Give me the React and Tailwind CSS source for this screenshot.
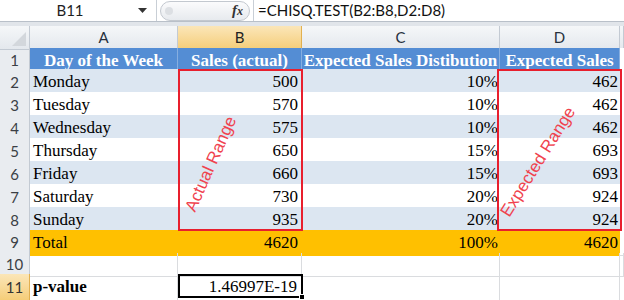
import React from 'react';

const rows = [
  ['Monday', 500, '10%', 462],
  ['Tuesday', 570, '10%', 462],
  ['Wednesday', 575, '10%', 462],
  ['Thursday', 650, '15%', 693],
  ['Friday', 660, '15%', 693],
  ['Saturday', 730, '20%', 924],
  ['Sunday', 935, '20%', 924],
];

const cols = 'grid grid-cols-[30px_148px_124px_198px_120px_1fr]';
const serif = "font-['Liberation_Serif','Times_New_Roman',serif]";
const ui = "font-['Lato','Liberation_Sans',sans-serif]";

const RowNum = ({ n, active }) => (
  <div
    className={`flex items-center justify-center border-r border-b text-[15px] ${ui} ${
      active
        ? 'bg-gradient-to-b from-[#fbe6b8] to-[#f5cd78] border-[#e2b04f] text-[#333]'
        : 'bg-[#e9ecf0] border-[#c3cad3] text-[#3b3f45]'
    }`}
  >
    {n}
  </div>
);

const App = () => {
  return (
    <div className="relative w-[624px] h-[300px] overflow-hidden bg-white">
      {/* Formula bar */}
      <div className={`flex h-[22px] items-center bg-white border-b border-[#b9c0c9] ${ui}`}>
        <div className="flex h-full w-[157px] items-center border-r border-[#c9cfd6]">
          <span className="w-[140px] text-center text-[15px] text-[#1e1e1e]">B11</span>
          <svg width="9" height="5" viewBox="0 0 9 5" className="ml-[-2px]">
            <path d="M0 0 H9 L4.5 5 Z" fill="#333" />
          </svg>
        </div>
        <div className="flex h-full w-[96px] items-center px-[3px]">
          <div className="flex h-[20px] w-full items-center justify-between rounded-full border border-[#c3c8cf] bg-gradient-to-b from-[#fbfbfc] to-[#e7eaee] pl-[4px] pr-[6px]">
            <span className="h-[8px] w-[8px] rounded-full bg-[#dcdfe3]"></span>
            <span className="font-['Liberation_Serif',serif] text-[15px] italic font-bold text-[#333]">
              f<span className="text-[12px]">x</span>
            </span>
          </div>
        </div>
        <div className="flex h-full flex-1 items-center border-l border-[#c9cfd6] pl-[4px] text-[15px] text-[#111]">
          =CHISQ.TEST(B2:B8,D2:D8)
        </div>
      </div>
      <div className="h-[4px] bg-[#e1e5ea]"></div>

      {/* Column headers */}
      <div className={`${cols} h-[22px] text-[15px] ${ui}`}>
        <div className="relative border-r border-b border-[#c3cad3] bg-gradient-to-b from-[#f5f7f9] to-[#e4e8ed]">
          <svg width="14" height="14" viewBox="0 0 14 14" className="absolute right-[3px] bottom-[3px]">
            <path d="M14 0 V14 H0 Z" fill="#d3d7dc" />
          </svg>
        </div>
        {['A', 'B', 'C', 'D', ''].map((c) => (
          <div
            key={c}
            className={`flex items-center justify-center border-r border-b ${
              c === 'B'
                ? 'bg-gradient-to-b from-[#fbe6b8] to-[#f5cd78] border-[#e2b04f] text-[#222]'
                : 'bg-gradient-to-b from-[#f5f7f9] to-[#e4e8ed] border-[#c3cad3] text-[#27313d]'
            }`}
          >
            {c}
          </div>
        ))}
      </div>

      {/* Row 1: table header */}
      <div className={`${cols} h-[21px] ${serif}`}>
        <RowNum n={1} />
        {['Day of the Week', 'Sales (actual)', 'Expected Sales Distibution', 'Expected Sales'].map((h) => (
          <div
            key={h}
            className="flex items-center justify-center overflow-visible whitespace-nowrap border-r border-[#86aee0] bg-[#548dd4] text-[17px] font-bold text-white"
          >
            {h}
          </div>
        ))}
        <div className="bg-white"></div>
      </div>

      {/* Rows 2-8 */}
      {rows.map((r, i) => {
        const band = i % 2 === 0 ? 'bg-[#dce6f1]' : 'bg-white';
        return (
          <div key={r[0]} className={`${cols} h-[23px] ${serif} text-[17px] text-black`}>
            <RowNum n={i + 2} />
            <div className={`${band} flex items-center border-b border-[#9fbadd] pl-[3px]`}>{r[0]}</div>
            <div className={`${band} flex items-center justify-end border-b border-[#9fbadd] pr-[4px]`}>{r[1]}</div>
            <div className={`${band} flex items-center justify-end border-b border-[#9fbadd] pr-[2px]`}>{r[2]}</div>
            <div className={`${band} flex items-center justify-end border-b border-[#9fbadd] pr-[2px]`}>{r[3]}</div>
            <div className="bg-white border-b border-[#dadcdf]"></div>
          </div>
        );
      })}

      {/* Row 9: total */}
      <div className={`${cols} h-[23px] ${serif} text-[17px] text-black`}>
        <RowNum n={9} />
        <div className="flex items-center bg-[#ffc000] pl-[3px]">Total</div>
        <div className="flex items-center justify-end bg-[#ffc000] pr-[4px]">4620</div>
        <div className="flex items-center justify-end bg-[#ffc000] pr-[2px]">100%</div>
        <div className="flex items-center justify-end bg-[#ffc000] pr-[2px]">4620</div>
        <div className="bg-white border-b border-[#dadcdf]"></div>
      </div>

      {/* Row 10 */}
      <div className={`${cols} h-[21px]`}>
        <RowNum n={10} />
        {[0, 1, 2, 3, 4].map((k) => (
          <div key={k} className="border-r border-b border-[#dadcdf]"></div>
        ))}
      </div>

      {/* Row 11 */}
      <div className={`${cols} h-[24px] ${serif} text-[17px] text-black`}>
        <RowNum n={11} active />
        <div className="flex items-center border-r border-b border-[#dadcdf] pl-[3px] font-bold">p-value</div>
        <div className="flex items-center justify-end border-r border-b border-[#dadcdf] pr-[4px]">1.46997E-19</div>
        <div className="border-r border-b border-[#dadcdf]"></div>
        <div className="border-r border-b border-[#dadcdf]"></div>
        <div className="border-b border-[#dadcdf]"></div>
      </div>

      {/* Overlays: selected cell and drawn annotations */}
      <div className="absolute left-[178px] top-[274px] h-[24px] w-[125px] border-2 border-black"></div>
      <div className="absolute left-[299px] top-[294px] h-[6px] w-[6px] border border-white bg-black"></div>

      <div className="absolute left-[178px] top-[69px] h-[162px] w-[125px] border-2 border-[#e81f2d]"></div>
      <div className="absolute left-[497px] top-[69px] h-[162px] w-[125px] border-2 border-[#e81f2d]"></div>

      <div
        className={`absolute left-[211px] top-[164px] -translate-x-1/2 -translate-y-1/2 rotate-[-66deg] whitespace-nowrap text-[17px] text-[#f0424e] font-['Liberation_Sans',sans-serif]`}
      >
        Actual Range
      </div>
      <div
        className={`absolute left-[538px] top-[162px] -translate-x-1/2 -translate-y-1/2 rotate-[-58deg] whitespace-nowrap text-[17px] text-[#f0424e] font-['Liberation_Sans',sans-serif]`}
      >
        Expected Range
      </div>
    </div>
  );
};

export default App;
